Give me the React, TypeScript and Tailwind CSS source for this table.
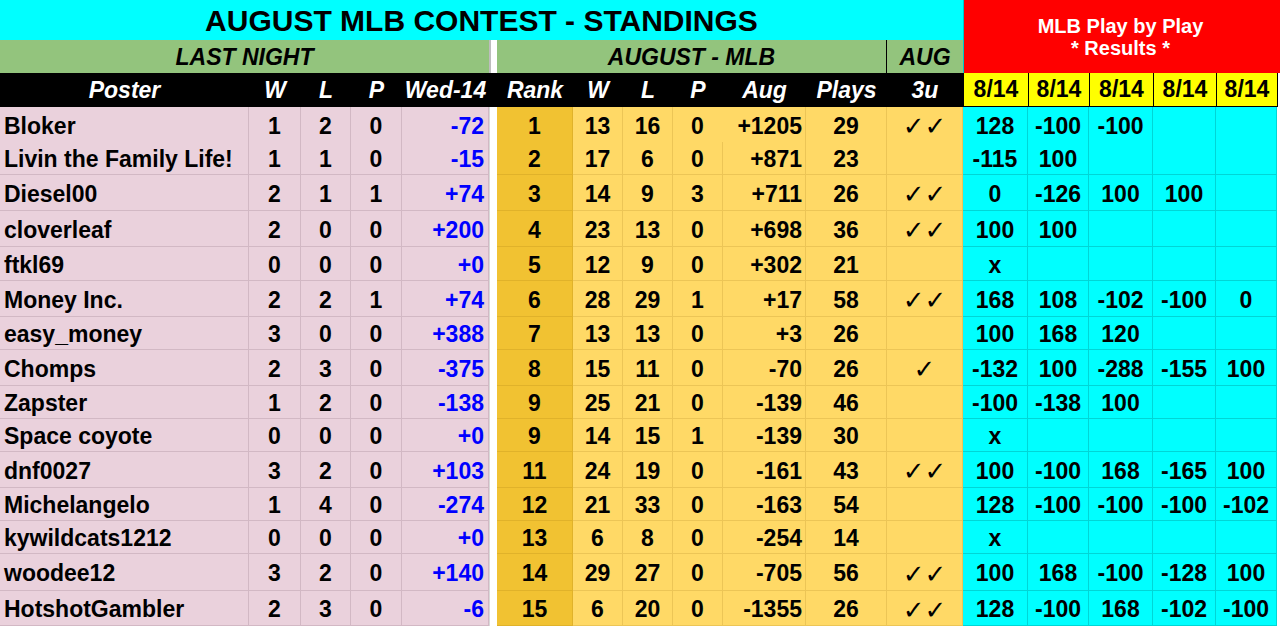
import React from "react";

const cols =
  "grid grid-cols-[249px_52px_50px_51px_87px_8px_76px_50px_50px_50px_83px_81px_76px_65px_61px_64px_63px_61px_3px]";

type Row = {
  name: string;
  ln: [number, number, number];
  wed: string;
  rank: number;
  mlb: [number, number, number];
  aug: string;
  plays: number;
  u3: string;
  pbp: string[];
  h: string;
};

const rows: Row[] = [
  { name: "Bloker", ln: [1, 2, 0], wed: "-72", rank: 1, mlb: [13, 16, 0], aug: "+1205", plays: 29, u3: "✓✓", pbp: ["128", "-100", "-100"], h: "h-[35px]" },
  { name: "Livin the Family Life!", ln: [1, 1, 0], wed: "-15", rank: 2, mlb: [17, 6, 0], aug: "+871", plays: 23, u3: "", pbp: ["-115", "100"], h: "h-[33px]" },
  { name: "Diesel00", ln: [2, 1, 1], wed: "+74", rank: 3, mlb: [14, 9, 3], aug: "+711", plays: 26, u3: "✓✓", pbp: ["0", "-126", "100", "100"], h: "h-[36px]" },
  { name: "cloverleaf", ln: [2, 0, 0], wed: "+200", rank: 4, mlb: [23, 13, 0], aug: "+698", plays: 36, u3: "✓✓", pbp: ["100", "100"], h: "h-[36px]" },
  { name: "ftkl69", ln: [0, 0, 0], wed: "+0", rank: 5, mlb: [12, 9, 0], aug: "+302", plays: 21, u3: "", pbp: ["x"], h: "h-[34px]" },
  { name: "Money Inc.", ln: [2, 2, 1], wed: "+74", rank: 6, mlb: [28, 29, 1], aug: "+17", plays: 58, u3: "✓✓", pbp: ["168", "108", "-102", "-100", "0"], h: "h-[36px]" },
  { name: "easy_money", ln: [3, 0, 0], wed: "+388", rank: 7, mlb: [13, 13, 0], aug: "+3", plays: 26, u3: "", pbp: ["100", "168", "120"], h: "h-[33px]" },
  { name: "Chomps", ln: [2, 3, 0], wed: "-375", rank: 8, mlb: [15, 11, 0], aug: "-70", plays: 26, u3: "✓", pbp: ["-132", "100", "-288", "-155", "100"], h: "h-[36px]" },
  { name: "Zapster", ln: [1, 2, 0], wed: "-138", rank: 9, mlb: [25, 21, 0], aug: "-139", plays: 46, u3: "", pbp: ["-100", "-138", "100"], h: "h-[33px]" },
  { name: "Space coyote", ln: [0, 0, 0], wed: "+0", rank: 9, mlb: [14, 15, 1], aug: "-139", plays: 30, u3: "", pbp: ["x"], h: "h-[33px]" },
  { name: "dnf0027", ln: [3, 2, 0], wed: "+103", rank: 11, mlb: [24, 19, 0], aug: "-161", plays: 43, u3: "✓✓", pbp: ["100", "-100", "168", "-165", "100"], h: "h-[36px]" },
  { name: "Michelangelo", ln: [1, 4, 0], wed: "-274", rank: 12, mlb: [21, 33, 0], aug: "-163", plays: 54, u3: "", pbp: ["128", "-100", "-100", "-100", "-102"], h: "h-[33px]" },
  { name: "kywildcats1212", ln: [0, 0, 0], wed: "+0", rank: 13, mlb: [6, 8, 0], aug: "-254", plays: 14, u3: "", pbp: ["x"], h: "h-[33px]" },
  { name: "woodee12", ln: [3, 2, 0], wed: "+140", rank: 14, mlb: [29, 27, 0], aug: "-705", plays: 56, u3: "✓✓", pbp: ["100", "168", "-100", "-128", "100"], h: "h-[37px]" },
  { name: "HotshotGambler", ln: [2, 3, 0], wed: "-6", rank: 15, mlb: [6, 20, 0], aug: "-1355", plays: 26, u3: "✓✓", pbp: ["128", "-100", "168", "-102", "-100"], h: "h-[35px]" },
];

const pink = "bg-[#ead1dc] border-[#d2b8c4]";
const gold = "bg-[#ffd966] border-[#ecc556]";
const cyan = "bg-[#00ffff] border-[#00d6d6]";

const DataRow = ({ r, i }: { r: Row; i: number }) => {
  const b = i === 0 ? "border-r" : "border-r border-b";
  const c = `flex items-center pt-[3px] ${b}`;
  return (
    <div className={`${cols} ${r.h}`}>
      <div className={`${c} ${pink} pl-[4px] whitespace-nowrap`}>{r.name}</div>
      {r.ln.map((v, k) => (
        <div key={k} className={`${c} ${pink} justify-center`}>{v}</div>
      ))}
      <div className={`${c} ${pink} justify-end pr-[4px] text-[#0000ff]`}>{r.wed}</div>
      <div className="bg-white border-l border-[#d9d9d9]" />
      <div className={`${c} bg-[#f1c232] border-[#e0b22a] justify-center`}>{r.rank}</div>
      {r.mlb.map((v, k) => (
        <div key={k} className={`${c} ${gold} justify-center ${i === 0 && k === 2 ? "border-r-transparent" : ""}`}>{v}</div>
      ))}
      <div className={`${c} ${gold} justify-end pr-[3px]`}>{r.aug}</div>
      <div className={`${c} ${gold} justify-center`}>{r.plays}</div>
      <div className={`${c} ${gold} justify-center font-['DejaVu_Sans',sans-serif] font-normal text-[26px]`}>{r.u3}</div>
      {[0, 1, 2, 3, 4].map((k) => (
        <div key={k} className={`${c} ${cyan} justify-center`}>{r.pbp[k] ?? ""}</div>
      ))}
      <div className="bg-white" />
    </div>
  );
};

export default function App() {
  const hd = "flex items-center justify-center text-white italic";
  return (
    <div className="w-[1280px] h-[628px] overflow-hidden bg-white font-['Liberation_Sans',Arial,sans-serif] font-bold text-[23px] text-black leading-none">
      <div className={`${cols} grid-rows-[40px_33px_34px]`}>
        <div className="col-start-1 col-end-14 row-start-1 bg-[#00ffff] flex items-center justify-center text-[30px] pt-[1px]">
          AUGUST MLB CONTEST - STANDINGS
        </div>
        <div className="col-start-14 col-end-20 row-start-1 row-end-3 bg-[#ff0000] border-l border-[#00c8c8] flex flex-col items-center justify-center text-white text-[20px] leading-[22px] pr-[3px]">
          <span>MLB Play by Play</span>
          <span>* Results *</span>
        </div>
        <div className="col-start-1 col-end-6 row-start-2 bg-[#93c47d] flex items-center justify-center italic pt-[1px]">
          LAST NIGHT
        </div>
        <div className="col-start-6 row-start-2 bg-white border-l-2 border-[#bdbdbd]" />
        <div className="col-start-7 col-end-13 row-start-2 bg-[#93c47d] border-r border-black flex items-center justify-center italic pt-[1px]">
          AUGUST - MLB
        </div>
        <div className="col-start-13 row-start-2 bg-[#93c47d] flex items-center justify-center italic pt-[1px]">
          AUG
        </div>
        <div className="col-start-1 col-end-14 row-start-3 bg-black grid grid-cols-[249px_52px_50px_51px_87px_8px_76px_50px_50px_50px_83px_81px_76px]">
          <div className={hd}>Poster</div>
          <div className={hd}>W</div>
          <div className={hd}>L</div>
          <div className={hd}>P</div>
          <div className={hd}>Wed-14</div>
          <div />
          <div className={hd}>Rank</div>
          <div className={hd}>W</div>
          <div className={hd}>L</div>
          <div className={hd}>P</div>
          <div className={hd}>Aug</div>
          <div className={hd}>Plays</div>
          <div className={hd}>3u</div>
        </div>
        {[14, 15, 16, 17, 18].map((k) => (
          <div
            key={k}
            className={`row-start-3 bg-[#ffff00] border-l border-b border-black flex items-center justify-center ${
              ["col-start-14", "col-start-15", "col-start-16", "col-start-17", "col-start-18"][k - 14]
            }`}
          >
            8/14
          </div>
        ))}
        <div className="row-start-3 col-start-19 bg-white border-l border-black" />
      </div>
      {rows.map((r, i) => (
        <DataRow key={i} r={r} i={i} />
      ))}
    </div>
  );
}
